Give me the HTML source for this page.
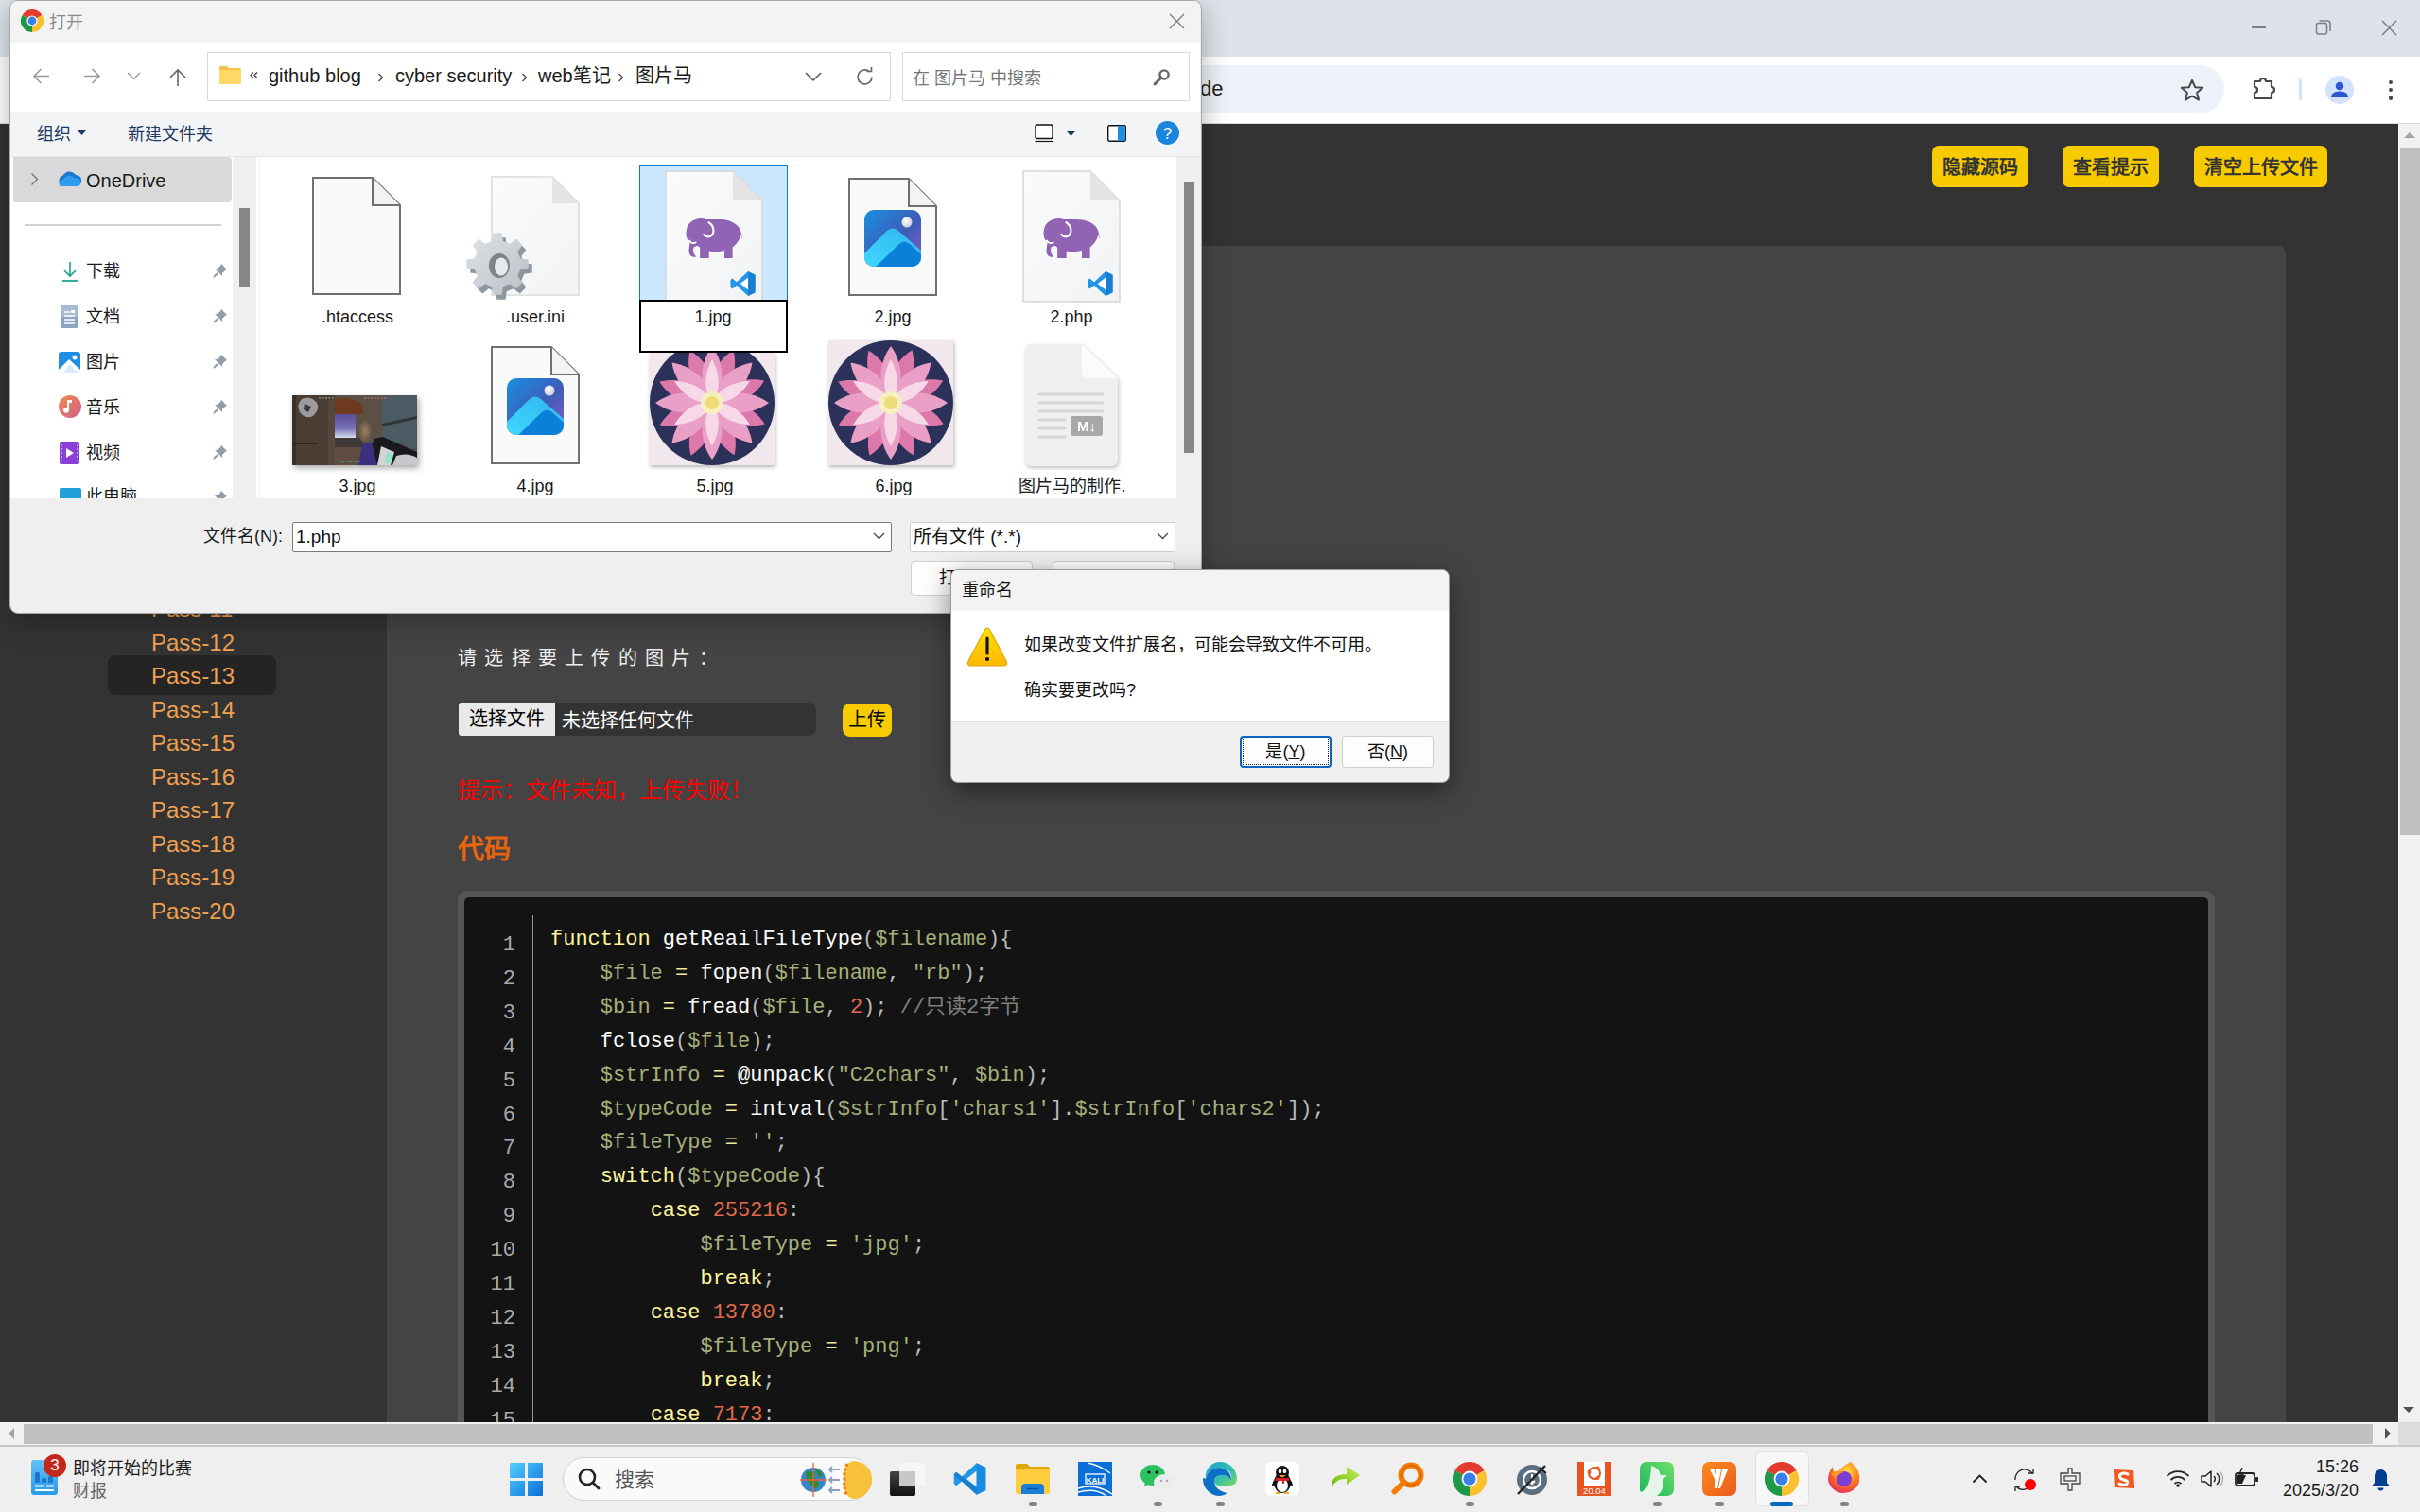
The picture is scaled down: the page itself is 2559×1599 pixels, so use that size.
<!DOCTYPE html>
<html lang="zh-CN"><head><meta charset="utf-8">
<style>
*{box-sizing:border-box;margin:0;padding:0}
html,body{width:2559px;height:1599px;overflow:hidden;background:#333;font-family:"Liberation Sans",sans-serif}
.a{position:absolute}
/* chrome */
#ctitle{left:0;top:0;width:2559px;height:60px;background:#dee3eb}
#ctool{left:0;top:60px;width:2559px;height:71px;background:#fff;border-bottom:1px solid #dcdcdc}
#pill{left:1000px;top:69px;width:1352px;height:51px;border-radius:26px;background:#edf2fa}
/* page */
#page{left:0;top:131px;width:2536px;height:1373px;background:#333;overflow:hidden}
#hdr{left:0;top:0;width:2536px;height:99px;background:#333;border-bottom:1px solid #000}
.ybtn{background:#f7cb00;border-radius:7px;color:#333;font-weight:bold;font-size:20px;height:44px;line-height:46px;text-align:center}
#main{left:409px;top:129px;width:2008px;height:1400px;background:#444;border-radius:8px}
.pass{left:160px;color:#f0a050;font-size:24px;line-height:30px}
#vs{left:2536px;top:131px;width:23px;height:1373px;background:#f1f1f1;border-left:1px solid #fff}
#hs{left:0;top:1504px;width:2536px;height:24px;background:#f1f1f1}
#corner{left:2536px;top:1504px;width:23px;height:24px;background:#dcdcdc}
#task{left:0;top:1528px;width:2559px;height:71px;background:#efefef;border-top:2px solid #c8c8c8}

.lnum{font-family:"Liberation Mono",monospace;font-size:22px;line-height:35.9px;color:#aaa;text-align:right}
.code{font-family:"Liberation Mono",monospace;font-size:22px;line-height:35.9px;color:#fff;white-space:pre}
.k{color:#fff59d}.f{color:#fff}.v{color:#a6b07a}.p{color:#bbb}.o{color:#f0e8a0}.s{color:#a6b07a}.n{color:#e0694a}.c{color:#808080}
.lbl{width:180px;text-align:center;font-size:18px;line-height:24px;color:#1a1a1a;white-space:nowrap}
</style></head><body>
<div id="ctitle" class="a"></div>
<div id="ctool" class="a"></div>
<div id="pill" class="a"></div>

<div id="page" class="a">
  <div id="hdr" class="a">
    <div class="a ybtn" style="left:2043px;top:23px;width:102px">隐藏源码</div>
    <div class="a ybtn" style="left:2181px;top:23px;width:102px">查看提示</div>
    <div class="a ybtn" style="left:2320px;top:23px;width:141px">清空上传文件</div>
  </div>

  <div class="a" style="left:114px;top:562px;width:178px;height:42px;background:#242424;border-radius:8px"></div>
<div class="a pass" style="top:498.0px">Pass-11</div>
<div class="a pass" style="top:533.5px">Pass-12</div>
<div class="a pass" style="top:569.0px">Pass-13</div>
<div class="a pass" style="top:604.5px">Pass-14</div>
<div class="a pass" style="top:640.0px">Pass-15</div>
<div class="a pass" style="top:675.5px">Pass-16</div>
<div class="a pass" style="top:711.0px">Pass-17</div>
<div class="a pass" style="top:746.5px">Pass-18</div>
<div class="a pass" style="top:782.0px">Pass-19</div>
<div class="a pass" style="top:817.5px">Pass-20</div>

  <div id="main" class="a"></div>
  <div class="a" style="left:484px;top:547px;color:#eee;font-size:20px;letter-spacing:8.3px;line-height:36px;white-space:nowrap">请选择要上传的图片：</div>
  <div class="a" style="left:485px;top:612px;width:378px;height:35px;background:#333;border-radius:8px"></div>
  <div class="a" style="left:485px;top:612px;width:102px;height:35px;background:#e9e9e9;border-radius:3px 0 0 3px;color:#000;font-size:20px;line-height:35px;text-align:center">选择文件</div>
  <div class="a" style="left:594px;top:614px;color:#fff;font-size:20px;line-height:35px;white-space:nowrap">未选择任何文件</div>
  <div class="a" style="left:891px;top:613px;width:52px;height:35px;background:#f7cb00;border-radius:8px;color:#000;font-size:20px;line-height:35px;text-align:center">上传</div>
  <div class="a" style="left:484px;top:689px;color:#f00;font-size:24px;line-height:32px;white-space:nowrap">提示：文件未知，上传失败！</div>
  <div class="a" style="left:484px;top:750px;color:#e8650e;font-size:28px;font-weight:bold;line-height:36px">代码</div>
  <div class="a" style="left:484px;top:811px;width:1858px;height:700px;background:#555;border-radius:10px"></div>
  <div class="a" style="left:491px;top:818px;width:1844px;height:700px;background:#131313;border-radius:5px"></div>
  <div class="a" style="left:563px;top:837px;width:1px;height:700px;background:#999"></div>
  <div class="a lnum" style="left:491px;top:851px;width:54px"><div>1</div><div>2</div><div>3</div><div>4</div><div>5</div><div>6</div><div>7</div><div>8</div><div>9</div><div>10</div><div>11</div><div>12</div><div>13</div><div>14</div><div>15</div></div>
  <div class="a code" style="left:582px;top:845px"><div><span class="k">function</span> <span class="f">getReailFileType</span><span class="p">(</span><span class="v">$filename</span><span class="p">){</span></div><div>    <span class="v">$file</span> <span class="o">=</span> <span class="f">fopen</span><span class="p">(</span><span class="v">$filename</span><span class="p">,</span> <span class="s">"rb"</span><span class="p">);</span></div><div>    <span class="v">$bin</span> <span class="o">=</span> <span class="f">fread</span><span class="p">(</span><span class="v">$file</span><span class="p">,</span> <span class="n">2</span><span class="p">);</span> <span class="c">//只读2字节</span></div><div>    <span class="f">fclose</span><span class="p">(</span><span class="v">$file</span><span class="p">);</span></div><div>    <span class="v">$strInfo</span> <span class="o">=</span> <span class="f">@unpack</span><span class="p">(</span><span class="s">"C2chars"</span><span class="p">,</span> <span class="v">$bin</span><span class="p">);</span></div><div>    <span class="v">$typeCode</span> <span class="o">=</span> <span class="f">intval</span><span class="p">(</span><span class="v">$strInfo</span><span class="p">[</span><span class="s">'chars1'</span><span class="p">].</span><span class="v">$strInfo</span><span class="p">[</span><span class="s">'chars2'</span><span class="p">]);</span></div><div>    <span class="v">$fileType</span> <span class="o">=</span> <span class="s">''</span><span class="p">;</span></div><div>    <span class="k">switch</span><span class="p">(</span><span class="v">$typeCode</span><span class="p">){</span></div><div>        <span class="k">case</span> <span class="n">255216</span><span class="p">:</span></div><div>            <span class="v">$fileType</span> <span class="o">=</span> <span class="s">'jpg'</span><span class="p">;</span></div><div>            <span class="k">break</span><span class="p">;</span></div><div>        <span class="k">case</span> <span class="n">13780</span><span class="p">:</span></div><div>            <span class="v">$fileType</span> <span class="o">=</span> <span class="s">'png'</span><span class="p">;</span></div><div>            <span class="k">break</span><span class="p">;</span></div><div>        <span class="k">case</span> <span class="n">7173</span><span class="p">:</span></div></div>
</div>
<div id="vs" class="a"></div>
<div id="hs" class="a"></div>
<div id="corner" class="a"></div>
<div id="task" class="a"></div>
<!-- chrome toolbar details -->
<div class="a" style="left:1269px;top:79px;font-size:22px;line-height:30px;color:#1f1f1f">de</div>
<svg class="a" style="left:2305px;top:83px" width="26" height="24" viewBox="0 0 26 24"><path d="M13 1.8L16.2 9.2L24.2 9.8L18.1 15L20 22.6L13 18.5L6 22.6L7.9 15L1.8 9.8L9.8 9.2Z" fill="none" stroke="#474747" stroke-width="2" stroke-linejoin="round"/></svg>
<svg class="a" style="left:2381px;top:80px" width="27" height="27" viewBox="0 0 27 27"><path d="M3 6H9A3 3 0 0 1 15 6H21V12A3 3 0 0 1 21 18V24H3V18A3 3 0 0 0 3 12Z" fill="none" stroke="#474747" stroke-width="2.2" stroke-linejoin="round"/></svg>
<div class="a" style="left:2431px;top:83px;width:3px;height:23px;background:#d3e3fd;border-radius:2px"></div>
<div class="a" style="left:2459px;top:80px;width:30px;height:30px;border-radius:50%;background:#d3e3fd"></div>
<svg class="a" style="left:2464px;top:85px" width="20" height="20" viewBox="0 0 20 20"><circle cx="10" cy="6" r="4.3" fill="#2f55d4"/><path d="M1 18Q1 11.5 10 11.5Q19 11.5 19 18Z" fill="#2f55d4"/></svg>
<div class="a" style="left:2525.5px;top:84.5px;width:4.5px;height:4.5px;border-radius:50%;background:#474747"></div>
<div class="a" style="left:2525.5px;top:92.8px;width:4.5px;height:4.5px;border-radius:50%;background:#474747"></div>
<div class="a" style="left:2525.5px;top:101px;width:4.5px;height:4.5px;border-radius:50%;background:#474747"></div>
<div class="a" style="left:2381px;top:28px;width:15px;height:1.5px;background:#7a7f85"></div>
<svg class="a" style="left:2448px;top:20px" width="18" height="18" viewBox="0 0 18 18"><rect x="1.5" y="4.5" width="11" height="11.5" rx="2" fill="none" stroke="#7a7f85" stroke-width="1.5"/><path d="M4.5 2H13A3 3 0 0 1 16 5V13" fill="none" stroke="#7a7f85" stroke-width="1.5"/></svg>
<svg class="a" style="left:2518px;top:21px" width="17" height="17"><path d="M1 1L16 16M16 1L1 16" stroke="#7a7f85" stroke-width="1.5"/></svg>
<!-- page scrollbars -->
<svg class="a" style="left:2542px;top:139px" width="12" height="8"><path d="M0 7L6 1L12 7Z" fill="#a3a3a3"/></svg>
<div class="a" style="left:2538px;top:156px;width:21px;height:727px;background:#c1c1c1"></div>
<svg class="a" style="left:2541px;top:1487px" width="12" height="8"><path d="M0 1L6 7L12 1Z" fill="#505050"/></svg>
<svg class="a" style="left:8px;top:1510px" width="8" height="12"><path d="M7 0L1 6L7 12Z" fill="#a3a3a3"/></svg>
<div class="a" style="left:25px;top:1506px;width:2484px;height:21px;background:#c1c1c1"></div>
<svg class="a" style="left:2521px;top:1510px" width="8" height="12"><path d="M1 0L7 6L1 12Z" fill="#505050"/></svg>
<!-- taskbar -->
<svg class="a" style="left:33px;top:1544px" width="29" height="37" viewBox="0 0 29 37"><defs><linearGradient id="gwd" x1="0" y1="0" x2="0" y2="1"><stop offset="0" stop-color="#62c0f8"/><stop offset="1" stop-color="#2a9ae6"/></linearGradient></defs><rect width="28" height="37" rx="3" fill="url(#gwd)"/><rect x="4" y="13" width="5" height="11" rx="1.5" fill="#1a76d0"/><rect x="11" y="19" width="5" height="5" rx="1.5" fill="#1a76d0"/><rect x="18" y="17" width="5" height="7" rx="1.5" fill="#1a76d0"/><path d="M4 27.5H13M16 27.5H24M4 32H24" stroke="#fff" stroke-width="2"/></svg>
<div class="a" style="left:46px;top:1538px;width:24px;height:24px;border-radius:50%;background:#c4281c;color:#fff;font-size:17px;line-height:24px;text-align:center">3</div>
<div class="a" style="left:77px;top:1540px;font-size:18px;line-height:26px;color:#1a1a1a;white-space:nowrap">即将开始的比赛</div>
<div class="a" style="left:77px;top:1564px;font-size:18px;line-height:26px;color:#666;white-space:nowrap">财报</div>
<svg class="a" style="left:539px;top:1547px" width="35" height="35" viewBox="0 0 35 35"><defs><linearGradient id="gwin" x1="0" y1="0" x2="1" y2="1"><stop offset="0" stop-color="#52d0ff"/><stop offset="1" stop-color="#0a6fd6"/></linearGradient></defs><path d="M1 0H16V16H0V1A1 1 0 0 1 1 0ZM19 0H34A1 1 0 0 1 35 1V16H19ZM0 19H16V35H1A1 1 0 0 1 0 34ZM19 19H35V34A1 1 0 0 1 34 35H19Z" fill="url(#gwin)"/></svg>
<div class="a" style="left:595px;top:1541px;width:327px;height:46px;border-radius:23px;background:#fafafa;border:1.5px solid #d2d2d2"></div>
<svg class="a" style="left:611px;top:1552px" width="24" height="24"><circle cx="10" cy="10" r="8" fill="none" stroke="#222" stroke-width="2.6"/><path d="M16 16L22 22" stroke="#222" stroke-width="2.8" stroke-linecap="round"/></svg>
<div class="a" style="left:650px;top:1550px;font-size:21px;line-height:30px;color:#555">搜索</div>
<svg class="a" style="left:846px;top:1545px" width="76" height="40" viewBox="0 0 76 40"><circle cx="14" cy="20" r="13" fill="#3a85c8"/><path d="M6 12Q12 9 16 13Q14 18 18 20Q22 26 16 30Q12 24 8 22Z" fill="#2f8a2a"/><path d="M16 8Q22 10 24 16L20 17Q18 12 16 8Z" fill="#2f8a2a"/><path d="M0 20H28M14 2V38" stroke="#f06040" stroke-width="1.3"/><path d="M32 9H42M32 20H42M32 31H42" stroke="#8aa0b8" stroke-width="2.2"/><path d="M34 6L31 9L34 12M34 17L31 20L34 23M34 28L31 31L34 34" fill="none" stroke="#8aa0b8" stroke-width="1.8"/><path d="M56 0A20 20 0 0 1 56 40Q46 38 46 20Q46 2 56 0Z" fill="#f7c23a"/><path d="M50 3Q46 10 47 20Q46 30 50 37" fill="none" stroke="#f07a18" stroke-width="3" stroke-dasharray="3 2"/></svg>
<svg class="a" style="left:941px;top:1547px" width="37" height="35" viewBox="0 0 37 35"><defs><linearGradient id="gtv" x1="0" y1="0" x2="0" y2="1"><stop offset="0" stop-color="#444"/><stop offset="1" stop-color="#111"/></linearGradient></defs><rect x="10" y="0" width="27" height="24" rx="2" fill="#f6f6f6"/><rect x="0" y="9" width="27" height="26" rx="2" fill="url(#gtv)"/><rect x="10" y="9" width="17" height="15" fill="#c8c8c8"/></svg>
<!-- pinned apps -->
<svg class="a" style="left:1007px;top:1546px" width="37" height="36" viewBox="0 0 30 30"><path d="M21 1L29 5V25L21 29L8 17L3 21L1 19V11L3 9L8 13Z" fill="#2196e8"/><path d="M21 8V22L12 15Z" fill="#efefef"/><path d="M21 1L29 5V25L21 29Z" fill="#1a8ae0"/><path d="M1 11L3 9L21 22V29Z" fill="#0f6fbf" opacity=".6"/></svg>
<svg class="a" style="left:1074px;top:1547px" width="36" height="33" viewBox="0 0 36 33"><path d="M0 3A2 2 0 0 1 2 1H12L15 4H34A2 2 0 0 1 36 6V8H0Z" fill="#e0a800"/><path d="M0 6H36V31A2 2 0 0 1 34 33H2A2 2 0 0 1 0 31Z" fill="#ffcc3d"/><path d="M6 33V26A4 4 0 0 1 10 22H26A4 4 0 0 1 30 26V33Z" fill="#1a7fd8"/><path d="M12 27.5H24" stroke="#0c4f96" stroke-width="1.5"/></svg>
<div class="a" style="left:1088px;top:1588px;width:9px;height:4.5px;border-radius:3px;background:#858585"></div>
<svg class="a" style="left:1140px;top:1546px" width="36" height="36" viewBox="0 0 36 36"><rect width="36" height="36" fill="#0a6fd6"/><rect x="8" y="13" width="20" height="10" fill="none" stroke="#fff" stroke-width="1.3"/><text x="18" y="21.5" font-size="8" font-family="Liberation Sans" font-weight="bold" text-anchor="middle" fill="#fff">KALI</text><path d="M0 28Q18 22 36 34M0 32Q18 27 30 36M10 1Q22 3 34 12" fill="none" stroke="#fff" stroke-width="1.4"/></svg>
<svg class="a" style="left:1206px;top:1549px" width="36" height="30" viewBox="0 0 36 30"><ellipse cx="13" cy="11" rx="13" ry="11" fill="#2dc160"/><path d="M5 18L4 23L10 20Z" fill="#2dc160"/><circle cx="9" cy="8" r="1.6" fill="#111"/><circle cx="17" cy="8" r="1.6" fill="#111"/><ellipse cx="25" cy="19" rx="11" ry="9" fill="#ececec"/><circle cx="22" cy="17" r="1.3" fill="#aaa"/><circle cx="28" cy="17" r="1.3" fill="#aaa"/></svg>
<div class="a" style="left:1220px;top:1588px;width:9px;height:4.5px;border-radius:3px;background:#858585"></div>
<svg class="a" style="left:1272px;top:1546px" width="36" height="36" viewBox="0 0 36 36"><defs><linearGradient id="ged" x1="0" y1="0" x2="1" y2="1"><stop offset="0" stop-color="#1aa0d8"/><stop offset=".6" stop-color="#35c1a8"/><stop offset="1" stop-color="#7ed957"/></linearGradient></defs><path d="M18 0A18 18 0 0 1 36 18Q36 25 28 25H18Q12 25 12 20Q12 14 20 14Q28 14 30 20Q32 8 18 6Q6 6 3 18Q2 9 8 4Q12 0 18 0Z" fill="url(#ged)"/><path d="M3 18Q6 6 18 6Q30 8 30 20Q28 14 20 14Q12 14 12 20Q12 30 26 33Q22 36 18 36A18 18 0 0 1 0 18Q0 16 3 18Z" fill="#0c6fc6"/></svg>
<div class="a" style="left:1286px;top:1588px;width:9px;height:4.5px;border-radius:3px;background:#858585"></div>
<svg class="a" style="left:1338px;top:1546px" width="36" height="36" viewBox="0 0 36 36"><rect width="36" height="36" rx="6" fill="#fff"/><ellipse cx="18" cy="22" rx="9" ry="11" fill="#111"/><ellipse cx="18" cy="25" rx="6" ry="7" fill="#fff"/><circle cx="18" cy="11" r="7" fill="#111"/><ellipse cx="15.5" cy="10" rx="1.8" ry="2.2" fill="#fff"/><ellipse cx="20.5" cy="10" rx="1.8" ry="2.2" fill="#fff"/><path d="M14 14H22L18 16.5Z" fill="#f5a623"/><path d="M11 17H25V20H20V23H18V20H11Z" fill="#e02020"/><path d="M8 25L10 20M28 25L26 20" stroke="#111" stroke-width="2.5"/><path d="M11 33H16M20 33H25" stroke="#f5a623" stroke-width="2"/></svg>
<svg class="a" style="left:1407px;top:1550px" width="32" height="24" viewBox="0 0 32 24"><defs><linearGradient id="gar" x1="0" y1="1" x2="1" y2="0"><stop offset="0" stop-color="#6bb800"/><stop offset="1" stop-color="#c8f060"/></linearGradient></defs><path d="M1 23Q0 9 17 9V1L31 10L17 20V14Q6 13 1 23Z" fill="url(#gar)"/></svg>
<svg class="a" style="left:1471px;top:1546px" width="35" height="35" viewBox="0 0 35 35"><circle cx="21" cy="14" r="10.5" fill="none" stroke="#f57c00" stroke-width="6"/><circle cx="21" cy="14" r="10.5" fill="none" stroke="#9a3e00" stroke-width="1" opacity=".5"/><path d="M13.5 21.5L3.5 31.5" stroke="#f57c00" stroke-width="6" stroke-linecap="round"/></svg>
<svg class="a" style="left:1536px;top:1546px" width="36" height="36"><use href="#chrome"/></svg>
<div class="a" style="left:1550px;top:1588px;width:9px;height:4.5px;border-radius:3px;background:#858585"></div>
<svg class="a" style="left:1604px;top:1547px" width="34" height="34" viewBox="0 0 34 34"><circle cx="16" cy="18" r="16" fill="#5a7080"/><circle cx="16" cy="18" r="9" fill="none" stroke="#fff" stroke-width="2.5"/><path d="M16 12V22M13 19L16 22L19 19" fill="none" stroke="#fff" stroke-width="2"/><path d="M1 33L30 3" stroke="#222" stroke-width="2.4"/><path d="M24 5L31 11" stroke="#222" stroke-width="2"/></svg>
<svg class="a" style="left:1668px;top:1546px" width="36" height="36" viewBox="0 0 36 36"><rect width="36" height="36" fill="#e95420"/><rect x="7" y="0" width="22" height="26" fill="#fff"/><circle cx="18" cy="12" r="6" fill="none" stroke="#e95420" stroke-width="2"/><circle cx="12.5" cy="11" r="2" fill="#e95420"/><circle cx="21.5" cy="6.5" r="2" fill="#e95420"/><circle cx="21.5" cy="17" r="2" fill="#e95420"/><text x="18" y="34" font-size="9.5" font-family="Liberation Sans" text-anchor="middle" fill="#fff">20.04</text></svg>
<svg class="a" style="left:1734px;top:1546px" width="36" height="36" viewBox="0 0 36 36"><defs><linearGradient id="ggrn" x1="0" y1="1" x2="1" y2="0"><stop offset="0" stop-color="#19b35a"/><stop offset="1" stop-color="#6ee06a"/></linearGradient></defs><rect width="36" height="36" rx="7" fill="url(#ggrn)"/><path d="M12 4Q20 6 22 14L29 14L25 18Q26 30 18 36H0V32Q8 30 10 20Q12 12 12 4Z" fill="#e6f5ec"/></svg>
<div class="a" style="left:1748px;top:1588px;width:9px;height:4.5px;border-radius:3px;background:#858585"></div>
<svg class="a" style="left:1800px;top:1546px" width="36" height="36" viewBox="0 0 36 36"><defs><linearGradient id="gory" x1="0" y1="0" x2="1" y2="1"><stop offset="0" stop-color="#fb8c1c"/><stop offset="1" stop-color="#ea5a20"/></linearGradient></defs><rect width="36" height="36" rx="7" fill="url(#gory)"/><path d="M8 8L13 8L15 16L14 20ZM15 8H20L16 28L13 28ZM21 8H27L19 28L17 28Z" fill="#fff"/></svg>
<div class="a" style="left:1814px;top:1588px;width:9px;height:4.5px;border-radius:3px;background:#858585"></div>
<div class="a" style="left:1856px;top:1535px;width:57px;height:58px;border-radius:6px;background:#f7f7f7;border:1px solid #e2e2e2"></div>
<svg class="a" style="left:1866px;top:1546px" width="36" height="36"><use href="#chrome"/></svg>
<div class="a" style="left:1872px;top:1588px;width:24px;height:5px;border-radius:3px;background:#0067c0"></div>
<svg class="a" style="left:1932px;top:1545px" width="36" height="36" viewBox="0 0 36 36"><defs><radialGradient id="gff" cx=".6" cy=".3" r=".8"><stop offset="0" stop-color="#ffe040"/><stop offset=".5" stop-color="#ff7a18"/><stop offset="1" stop-color="#e0206a"/></radialGradient></defs><path d="M25 1Q36 10 34 22A17 17 0 0 1 1 20Q1 12 6 6Q6 12 10 14Q14 6 25 1Z" fill="url(#gff)"/><circle cx="18" cy="19" r="8" fill="#7b3fd6"/><path d="M4 14Q10 8 18 12Q12 13 10 18Z" fill="#ff9a1e"/></svg>
<div class="a" style="left:1946px;top:1588px;width:9px;height:4.5px;border-radius:3px;background:#858585"></div>
<!-- tray -->
<svg class="a" style="left:2085px;top:1558px" width="17" height="11"><path d="M1.5 9.5L8.5 2.5L15.5 9.5" fill="none" stroke="#222" stroke-width="1.8"/></svg>
<svg class="a" style="left:2128px;top:1551px" width="27" height="27" viewBox="0 0 27 27"><path d="M3 14A10 10 0 0 1 21 7" fill="none" stroke="#222" stroke-width="1.3"/><path d="M17 7H22V2" fill="none" stroke="#222" stroke-width="1.3"/><path d="M21 17A10 10 0 0 1 4 21" fill="none" stroke="#222" stroke-width="1.3"/><path d="M8 21H3V26" fill="none" stroke="#222" stroke-width="1.3"/><circle cx="19" cy="19" r="6" fill="#ff0000"/></svg>
<svg class="a" style="left:2177px;top:1552px" width="24" height="25" viewBox="0 0 24 25"><path d="M10 1H14V6H22V17H14V24H10V17H2V6H10Z" fill="none" stroke="#444" stroke-width="1.3"/><rect x="6" y="9" width="12" height="5" fill="none" stroke="#444" stroke-width="1.3"/></svg>
<svg class="a" style="left:2233px;top:1551px" width="26" height="26" viewBox="0 0 26 26"><path d="M3 2L24 5L23 24L2 21Z" fill="#f05a22" transform="rotate(-6 13 13)"/><path d="M17 8Q13 6 9.5 8Q7 10 10 13Q13 14 16 15Q18 17 15 19Q11 20 8 18" fill="none" stroke="#fff" stroke-width="3" stroke-linecap="round"/></svg>
<svg class="a" style="left:2290px;top:1554px" width="26" height="19" viewBox="0 0 26 19"><path d="M1.5 7A16 16 0 0 1 24.5 7M5.5 11A10.5 10.5 0 0 1 20.5 11M9.5 15A5 5 0 0 1 16.5 15" fill="none" stroke="#222" stroke-width="1.8"/><circle cx="13" cy="17" r="1.8" fill="#222"/></svg>
<svg class="a" style="left:2327px;top:1554px" width="25" height="20" viewBox="0 0 25 20"><path d="M1 7H5L11 2V18L5 13H1Z" fill="none" stroke="#222" stroke-width="1.5" stroke-linejoin="round"/><path d="M14 7A4 4 0 0 1 14 13M17 4A8 8 0 0 1 17 16" fill="none" stroke="#222" stroke-width="1.5"/><path d="M20 2A11 11 0 0 1 20 18" fill="none" stroke="#aaa" stroke-width="1.3"/></svg>
<svg class="a" style="left:2363px;top:1552px" width="26" height="21" viewBox="0 0 26 21"><rect x="1" y="6" width="20" height="13" rx="2.5" fill="none" stroke="#222" stroke-width="1.8"/><rect x="22" y="10" width="3" height="5" rx="1" fill="#222"/><path d="M3 8H12L8 17H3Z" fill="#222"/><path d="M8 0L5 7H9L6 13" fill="none" stroke="#222" stroke-width="1.4"/></svg>
<div class="a" style="left:2394px;top:1537px;width:100px;text-align:right;font-size:18px;line-height:28px;color:#1a1a1a">15:26</div>
<div class="a" style="left:2344px;top:1562px;width:150px;text-align:right;font-size:18px;line-height:28px;color:#1a1a1a">2025/3/20</div>
<svg class="a" style="left:2507px;top:1553px" width="21" height="24" viewBox="0 0 21 24"><path d="M10.5 1A6.5 6.5 0 0 1 17 7.5V15L20 18.5H1L4 15V7.5A6.5 6.5 0 0 1 10.5 1Z" fill="#003e92"/><path d="M7.5 20.5H13.5A3 3 0 0 1 7.5 20.5Z" fill="#003e92"/></svg>

<!-- ===== FILE DIALOG ===== -->
<svg width="0" height="0" style="position:absolute">
<defs>
<symbol id="chrome" viewBox="0 0 24 24"><path d="M12 12L1.6 6A12 12 0 0 1 22.4 6Z" fill="#e33b2e"/><path d="M12 12L22.4 6A12 12 0 0 1 12 24Z" fill="#fbc02d"/><path d="M12 12L12 24A12 12 0 0 1 1.6 6Z" fill="#1e9a46"/><circle cx="12" cy="12" r="5.6" fill="#fff"/><circle cx="12" cy="12" r="4.4" fill="#3a7ee8"/></symbol>
<symbol id="doc" viewBox="0 0 94 125"><path d="M1 1H64L93 30V124H1Z" fill="#fafafa" stroke="#707070" stroke-width="2"/><path d="M64 1V30H93" fill="#f3f3f3" stroke="#707070" stroke-width="2"/></symbol>
<symbol id="docl" viewBox="0 0 104 140"><defs><linearGradient id="gdl" x1="0" y1="0" x2="1" y2="1"><stop offset="0" stop-color="#fbfbfb"/><stop offset="1" stop-color="#f1f3f5"/></linearGradient></defs><path d="M1 1H72L103 32V139H1Z" fill="url(#gdl)" stroke="#d6d6d6" stroke-width="1.5"/><path d="M72 1V32H103Z" fill="#e4e4e4"/></symbol>
<symbol id="photos" viewBox="0 0 60 60"><defs><linearGradient id="gph" x1="0" y1="0" x2="1" y2="1"><stop offset="0" stop-color="#1690e2"/><stop offset=".55" stop-color="#3f5cb8"/><stop offset="1" stop-color="#8a5cc8"/></linearGradient><linearGradient id="gmt" x1="0" y1="1" x2="1" y2="0"><stop offset="0" stop-color="#3fd8ff"/><stop offset="1" stop-color="#30b4ee"/></linearGradient><radialGradient id="gsun" cx=".4" cy=".35" r=".7"><stop offset="0" stop-color="#fff"/><stop offset="1" stop-color="#c8cad8"/></radialGradient></defs><rect x="0" y="0" width="60" height="60" rx="10" fill="url(#gph)"/><path d="M0 46L24 22Q30 17 36 22L60 43V50A10 10 0 0 1 50 60H10A10 10 0 0 1 0 50Z" fill="url(#gmt)"/><path d="M12 60L37 36Q42 31 48 36L60 47V50A10 10 0 0 1 50 60Z" fill="#0b80d8"/><circle cx="45" cy="13" r="5.5" fill="url(#gsun)"/></symbol>
<symbol id="eleph" viewBox="0 0 64 48"><path d="M24 3C14 0 3 5 2 16C1 22 3 26 6 28L5 36C4 42 8 46 13 44C10 42 9 38 10 34L14 32L17 34V46H27V38C33 39 40 39 44 37V46H53V34C58 30 61 25 62 20L64 25L62 16C60 8 50 3 38 3C32 3 28 3 24 3Z" fill="#9063b4"/><path d="M26 6C33 10 34 19 28 22C25 23 22 21 21 19" fill="none" stroke="#fff" stroke-width="2.2"/><path d="M5 26C7 30 11 30 13 28" fill="none" stroke="#fff" stroke-width="1.8"/></symbol>
<symbol id="vsc" viewBox="0 0 30 30"><path d="M21 1L29 5V25L21 29L8 17L3 21L1 19V11L3 9L8 13Z" fill="#2196e8"/><path d="M21 8V22L12 15Z" fill="#fff"/><path d="M21 1L29 5V25L21 29Z" fill="#1a7fd0"/></symbol>
<symbol id="pin" viewBox="0 0 16 16"><path d="M9 1L15 7L13 8L10 11L10 14L2 6L5 6L8 3Z" fill="#919da6"/><path d="M5 11L1 15" stroke="#919da6" stroke-width="2"/></symbol>
<symbol id="lotus" viewBox="0 0 132 132"><rect width="132" height="132" fill="#f1e8ee"/><circle cx="66" cy="66" r="66" fill="#2b3158"/><g fill="#dc78aa"><path d="M66 64C50 50 54 22 66 6C78 22 82 50 66 64Z" transform="rotate(22 66 66)"/><path d="M66 64C50 50 54 22 66 6C78 22 82 50 66 64Z" transform="rotate(67 66 66)"/><path d="M66 64C50 50 54 22 66 6C78 22 82 50 66 64Z" transform="rotate(112 66 66)"/><path d="M66 64C50 50 54 22 66 6C78 22 82 50 66 64Z" transform="rotate(157 66 66)"/><path d="M66 64C50 50 54 22 66 6C78 22 82 50 66 64Z" transform="rotate(202 66 66)"/><path d="M66 64C50 50 54 22 66 6C78 22 82 50 66 64Z" transform="rotate(247 66 66)"/><path d="M66 64C50 50 54 22 66 6C78 22 82 50 66 64Z" transform="rotate(292 66 66)"/><path d="M66 64C50 50 54 22 66 6C78 22 82 50 66 64Z" transform="rotate(337 66 66)"/></g><g fill="#eaa0c6"><path d="M66 64C50 50 54 22 66 6C78 22 82 50 66 64Z" transform="rotate(0 66 66)"/><path d="M66 64C50 50 54 22 66 6C78 22 82 50 66 64Z" transform="rotate(45 66 66)"/><path d="M66 64C50 50 54 22 66 6C78 22 82 50 66 64Z" transform="rotate(90 66 66)"/><path d="M66 64C50 50 54 22 66 6C78 22 82 50 66 64Z" transform="rotate(135 66 66)"/><path d="M66 64C50 50 54 22 66 6C78 22 82 50 66 64Z" transform="rotate(180 66 66)"/><path d="M66 64C50 50 54 22 66 6C78 22 82 50 66 64Z" transform="rotate(225 66 66)"/><path d="M66 64C50 50 54 22 66 6C78 22 82 50 66 64Z" transform="rotate(270 66 66)"/><path d="M66 64C50 50 54 22 66 6C78 22 82 50 66 64Z" transform="rotate(315 66 66)"/></g><g fill="#f7d8e8"><path d="M66 64C56 54 58 34 66 20C74 34 76 54 66 64Z" transform="rotate(0 66 66)"/><path d="M66 64C56 54 58 34 66 20C74 34 76 54 66 64Z" transform="rotate(60 66 66)"/><path d="M66 64C56 54 58 34 66 20C74 34 76 54 66 64Z" transform="rotate(120 66 66)"/><path d="M66 64C56 54 58 34 66 20C74 34 76 54 66 64Z" transform="rotate(180 66 66)"/><path d="M66 64C56 54 58 34 66 20C74 34 76 54 66 64Z" transform="rotate(240 66 66)"/><path d="M66 64C56 54 58 34 66 20C74 34 76 54 66 64Z" transform="rotate(300 66 66)"/></g><circle cx="66" cy="66" r="12" fill="#f6efc0"/><circle cx="66" cy="66" r="7" fill="#eedc7a"/></symbol>
</defs></svg>

<div class="a" style="left:10px;top:0;width:1261px;height:649px;background:#efefef;border:1px solid #a3a7ab;border-radius:9px;box-shadow:0 8px 30px rgba(0,0,0,.3);overflow:hidden">
  <div class="a" style="left:0;top:0;width:1258px;height:44px;background:#f3f3f3"></div>
  <div class="a" style="left:0;top:44px;width:1258px;height:73px;background:#fff"></div>
  <div class="a" style="left:0;top:117px;width:1258px;height:48px;background:#f3f4f6;border-bottom:1px solid #e6e7e9"></div>
  <div class="a" style="left:0;top:165px;width:235px;height:361px;background:#fff"></div>
  <div class="a" style="left:260px;top:165px;width:974px;height:361px;background:#fff"></div><div class="a" style="left:263px;top:165px;width:1px;height:361px;background:#f0f0f0"></div>
</div>
<svg class="a" style="left:22px;top:10px" width="24" height="24"><use href="#chrome"/></svg>
<div class="a" style="left:52px;top:12px;font-size:18px;line-height:24px;color:#8a8a8a">打开</div>
<svg class="a" style="left:1236px;top:14px" width="17" height="17"><path d="M1 1L16 16M16 1L1 16" stroke="#7a7a7a" stroke-width="1.3"/></svg>
<!-- nav -->
<svg class="a" style="left:34px;top:71px" width="20" height="19"><path d="M18 9.5H2M9.5 2L2 9.5L9.5 17" fill="none" stroke="#9a9a9a" stroke-width="1.6"/></svg>
<svg class="a" style="left:87px;top:71px" width="20" height="19"><path d="M2 9.5H18M10.5 2L18 9.5L10.5 17" fill="none" stroke="#9a9a9a" stroke-width="1.6"/></svg>
<svg class="a" style="left:134px;top:76px" width="15" height="9"><path d="M1 1L7.5 7.5L14 1" fill="none" stroke="#a0a0a0" stroke-width="1.5"/></svg>
<svg class="a" style="left:178px;top:72px" width="20" height="20"><path d="M10 19V2M2 10L10 2L18 10" fill="none" stroke="#666" stroke-width="1.6"/></svg>
<div class="a" style="left:219px;top:55px;width:723px;height:52px;border:1px solid #d9d9d9;background:#fff"></div>
<svg class="a" style="left:232px;top:70px" width="23" height="19"><path d="M0 1.5A1.5 1.5 0 0 1 1.5 0H8L10 2H21.5A1.5 1.5 0 0 1 23 3.5V17.5A1.5 1.5 0 0 1 21.5 19H1.5A1.5 1.5 0 0 1 0 17.5Z" fill="#f4c24a"/><path d="M0 4H23V17.5A1.5 1.5 0 0 1 21.5 19H1.5A1.5 1.5 0 0 1 0 17.5Z" fill="#ffd965"/></svg>
<svg class="a" style="left:264px;top:76px" width="9" height="7"><path d="M4 0.5L1 3.5L4 6.5M8 0.5L5 3.5L8 6.5" fill="none" stroke="#444" stroke-width="1.3"/></svg>
<div class="a" style="left:284px;top:66px;font-size:20px;line-height:28px;color:#1a1a1a;white-space:nowrap;word-spacing:0">github blog</div>
<svg class="a" style="left:399px;top:77px" width="7" height="10"><path d="M1.5 1L5.5 5L1.5 9" fill="none" stroke="#555" stroke-width="1.5"/></svg>
<div class="a" style="left:418px;top:66px;font-size:20px;line-height:28px;color:#1a1a1a;white-space:nowrap">cyber security</div>
<svg class="a" style="left:551px;top:77px" width="7" height="10"><path d="M1.5 1L5.5 5L1.5 9" fill="none" stroke="#555" stroke-width="1.5"/></svg>
<div class="a" style="left:569px;top:66px;font-size:20px;line-height:28px;color:#1a1a1a;white-space:nowrap">web笔记</div>
<svg class="a" style="left:653px;top:77px" width="7" height="10"><path d="M1.5 1L5.5 5L1.5 9" fill="none" stroke="#555" stroke-width="1.5"/></svg>
<div class="a" style="left:672px;top:66px;font-size:20px;line-height:28px;color:#1a1a1a;white-space:nowrap">图片马</div>
<svg class="a" style="left:851px;top:76px" width="18" height="11"><path d="M1 1L9 9L17 1" fill="none" stroke="#555" stroke-width="1.5"/></svg>
<svg class="a" style="left:904px;top:71px" width="21" height="21"><path d="M18 10.5A7.5 7.5 0 1 1 15.5 4.8" fill="none" stroke="#666" stroke-width="1.6"/><path d="M12.5 4.5H17.5V-0.5" fill="none" stroke="#666" stroke-width="1.6"/></svg>
<div class="a" style="left:954px;top:55px;width:304px;height:52px;border:1px solid #d9d9d9;background:#fff"></div>
<div class="a" style="left:965px;top:69px;font-size:18px;line-height:28px;color:#767676;white-space:nowrap">在 图片马 中搜索</div>
<svg class="a" style="left:1218px;top:72px" width="20" height="20"><circle cx="13" cy="7" r="4.6" fill="none" stroke="#666" stroke-width="2.4"/><path d="M10 10L3 17" stroke="#666" stroke-width="3" stroke-linecap="round"/></svg>
<!-- toolbar -->
<div class="a" style="left:39px;top:129px;font-size:18px;line-height:26px;color:#1e3a63">组织</div>
<svg class="a" style="left:82px;top:138px" width="9" height="6"><path d="M0 0H9L4.5 5Z" fill="#1e3a63"/></svg>
<div class="a" style="left:135px;top:129px;font-size:18px;line-height:26px;color:#1e3a63">新建文件夹</div>
<svg class="a" style="left:1094px;top:131px" width="20" height="20"><rect x="1" y="1" width="18" height="14.5" rx="1.5" fill="#fff" stroke="#111" stroke-width="1.4"/><path d="M0.5 18.5H19.5" stroke="#111" stroke-width="1.2"/></svg>
<svg class="a" style="left:1128px;top:139px" width="9" height="6"><path d="M0 0H9L4.5 5Z" fill="#1e3a63"/></svg>
<svg class="a" style="left:1171px;top:132px" width="20" height="18"><rect x="0.7" y="0.7" width="18.6" height="16.6" rx="1.5" fill="#fff" stroke="#111" stroke-width="1.4"/><rect x="11" y="1.4" width="7.6" height="15.2" fill="#1a8de6"/></svg>
<svg class="a" style="left:1222px;top:128px" width="25" height="25"><circle cx="12.5" cy="12.5" r="12.5" fill="#1a85dc"/><text x="12.5" y="19" font-size="17" font-family="Liberation Sans" text-anchor="middle" fill="#fff">?</text></svg>
<!-- left pane -->
<div class="a" style="left:14px;top:166px;width:231px;height:48px;background:#d9d9d9;border-radius:0 4px 4px 0"></div>
<svg class="a" style="left:32px;top:182px" width="9" height="15"><path d="M1.5 1.5L7.5 7.5L1.5 13.5" fill="none" stroke="#777" stroke-width="1.4"/></svg>
<svg class="a" style="left:61px;top:181px" width="25" height="16"><path d="M6 16A6 6 0 0 1 5.5 4.5A8 8 0 0 1 19 4A5.5 5.5 0 0 1 19.5 16Z" fill="#1b78d4"/><path d="M3 16A4 4 0 0 1 6 9A7 7 0 0 1 18 7.5A4.5 4.5 0 0 1 24 13A3.5 3.5 0 0 1 21 16Z" fill="#2d9bf0"/></svg>
<div class="a" style="left:91px;top:177px;font-size:20px;line-height:28px;color:#1a1a1a">OneDrive</div>
<div class="a" style="left:26px;top:237px;width:208px;height:2px;background:#d0d0d0"></div>
<svg class="a" style="left:64px;top:276px" width="20" height="22"><path d="M10 1V16M4 10L10 16L16 10" fill="none" stroke="#1aa38a" stroke-width="1.6"/><path d="M2 21H18" stroke="#1aa38a" stroke-width="1.8"/></svg>
<div class="a" style="left:91px;top:273px;font-size:18px;line-height:28px;color:#1a1a1a">下载</div>
<svg class="a" style="left:64px;top:323px" width="19" height="24"><rect x="0" y="0" width="19" height="24" rx="2" fill="#8ea4c4"/><rect x="0" y="0" width="19" height="12" rx="2" fill="#a9bad3"/><path d="M4 7H10M4 11H15M4 15H15M4 19H15" stroke="#fff" stroke-width="1.4"/><rect x="11" y="5" width="4" height="3" fill="#fff"/></svg>
<div class="a" style="left:91px;top:321px;font-size:18px;line-height:28px;color:#1a1a1a">文档</div>
<svg class="a" style="left:62px;top:372px" width="23" height="22"><rect width="23" height="22" rx="3" fill="#1e8fe3"/><path d="M0 19L11 8L23 19V20A2 2 0 0 1 21 22H2A2 2 0 0 1 0 20Z" fill="#fff"/><path d="M5 22L12 13L20 22Z" fill="#d3ecff"/><circle cx="17" cy="6" r="2.5" fill="#fff"/></svg>
<div class="a" style="left:91px;top:369px;font-size:18px;line-height:28px;color:#1a1a1a">图片</div>
<svg class="a" style="left:62px;top:418px" width="24" height="24"><defs><linearGradient id="gmu" x1="0" y1="0" x2="1" y2="1"><stop offset="0" stop-color="#f08a4b"/><stop offset="1" stop-color="#d0608f"/></linearGradient></defs><circle cx="12" cy="12" r="12" fill="url(#gmu)"/><path d="M11 5V15.5A3 3 0 1 1 9 13V5H14V8H11" fill="#fff"/></svg>
<div class="a" style="left:91px;top:417px;font-size:18px;line-height:28px;color:#1a1a1a">音乐</div>
<svg class="a" style="left:63px;top:467px" width="21" height="24"><rect width="21" height="24" rx="2" fill="#8a3fd8"/><path d="M7 7L15 12L7 17Z" fill="#fff"/><path d="M2 3V21M19 3V21" stroke="#c79bf2" stroke-width="2" stroke-dasharray="2 2"/></svg>
<div class="a" style="left:91px;top:465px;font-size:18px;line-height:28px;color:#1a1a1a">视频</div>
<div class="a" style="left:63px;top:516px;width:23px;height:11px;overflow:hidden"><div style="width:23px;height:18px;background:#1fa0d8;border-radius:2px"></div></div>
<div class="a" style="left:91px;top:511px;height:16px;overflow:hidden;font-size:18px;line-height:28px;color:#1a1a1a">此电脑</div>
<svg class="a" style="left:225px;top:278px" width="16" height="16"><use href="#pin"/></svg>
<svg class="a" style="left:225px;top:326px" width="16" height="16"><use href="#pin"/></svg>
<svg class="a" style="left:225px;top:374px" width="16" height="16"><use href="#pin"/></svg>
<svg class="a" style="left:225px;top:422px" width="16" height="16"><use href="#pin"/></svg>
<svg class="a" style="left:225px;top:470px" width="16" height="16"><use href="#pin"/></svg>
<div class="a" style="left:225px;top:518px;width:16px;height:9px;overflow:hidden"><svg width="16" height="16"><use href="#pin"/></svg></div>
<!-- left scrollbar lane -->
<div class="a" style="left:246px;top:166px;width:25px;height:361px;background:#efefef"></div>
<div class="a" style="left:253px;top:220px;width:11px;height:84px;background:#868686"></div>
<!-- right scrollbar lane -->
<div class="a" style="left:1244px;top:166px;width:25px;height:361px;background:#efefef"></div>
<div class="a" style="left:1252px;top:192px;width:11px;height:287px;background:#868686"></div>
<!-- files -->
<svg class="a" style="left:330px;top:187px" width="94" height="125"><use href="#doc"/></svg>
<div class="a lbl" style="left:288px;top:323px">.htaccess</div>
<svg class="a" style="left:519px;top:186px" width="94" height="127" viewBox="0 0 104 140" preserveAspectRatio="none"><use href="#docl"/></svg>
<svg class="a" style="left:490px;top:237px" width="76" height="88" viewBox="0 0 76 88"><defs><linearGradient id="ggr" x1="0" y1="0" x2="1" y2="1"><stop offset="0" stop-color="#dfe3e7"/><stop offset="1" stop-color="#b9c0c6"/></linearGradient></defs><path d="M34.2 22.7 L35.4 14.3 L44.6 14.3 L45.8 22.7 L53.1 25.7 L59.8 20.6 L66.4 27.2 L61.3 33.9 L64.3 41.2 L72.7 42.4 L72.7 51.6 L64.3 52.8 L61.3 60.1 L66.4 66.8 L59.8 73.4 L53.1 68.3 L45.8 71.3 L44.6 79.7 L35.4 79.7 L34.2 71.3 L26.9 68.3 L20.2 73.4 L13.6 66.8 L18.7 60.1 L15.7 52.8 L7.3 51.6 L7.3 42.4 L15.7 41.2 L18.7 33.9 L13.6 27.2 L20.2 20.6 L26.9 25.7Z" fill="#8f979e"/><path d="M30.2 17.7 L31.4 9.3 L40.6 9.3 L41.8 17.7 L49.1 20.7 L55.8 15.6 L62.4 22.2 L57.3 28.9 L60.3 36.2 L68.7 37.4 L68.7 46.6 L60.3 47.8 L57.3 55.1 L62.4 61.8 L55.8 68.4 L49.1 63.3 L41.8 66.3 L40.6 74.7 L31.4 74.7 L30.2 66.3 L22.9 63.3 L16.2 68.4 L9.6 61.8 L14.7 55.1 L11.7 47.8 L3.3 46.6 L3.3 37.4 L11.7 36.2 L14.7 28.9 L9.6 22.2 L16.2 15.6 L22.9 20.7Z" fill="url(#ggr)"/><ellipse cx="38" cy="44" rx="11" ry="13" fill="#7d858c"/><ellipse cx="40" cy="45" rx="7" ry="9.5" fill="#e6e9ec"/></svg>
<div class="a lbl" style="left:476px;top:323px">.user.ini</div>
<div class="a" style="left:676px;top:175px;width:157px;height:144px;background:#cce8ff;border:1px solid #0a78d4;border-bottom:none"></div>
<svg class="a" style="left:703px;top:180px" width="104" height="138" viewBox="0 0 104 138" preserveAspectRatio="xMidYMin slice"><use href="#docl" width="104" height="140"/></svg>
<svg class="a" style="left:723px;top:229px" width="63" height="46"><use href="#eleph"/></svg>
<svg class="a" style="left:771px;top:286px" width="29" height="28"><use href="#vsc"/></svg>
<div class="a" style="left:676px;top:317px;width:157px;height:56px;background:#fff;border:2px solid #000"></div>
<div class="a lbl" style="left:664px;top:323px">1.jpg</div>
<svg class="a" style="left:897px;top:188px" width="94" height="125"><use href="#doc"/></svg>
<svg class="a" style="left:914px;top:222px" width="60" height="60"><use href="#photos"/></svg>
<div class="a lbl" style="left:854px;top:323px">2.jpg</div>
<svg class="a" style="left:1081px;top:180px" width="104" height="140"><use href="#docl"/></svg>
<svg class="a" style="left:1101px;top:229px" width="63" height="46"><use href="#eleph"/></svg>
<svg class="a" style="left:1149px;top:286px" width="29" height="28"><use href="#vsc"/></svg>
<div class="a lbl" style="left:1043px;top:323px">2.php</div>
<!-- row 2 -->
<svg class="a" style="left:309px;top:418px;filter:drop-shadow(2px 3px 3px rgba(0,0,0,.35))" width="132" height="74" viewBox="0 0 132 74"><defs><linearGradient id="gwin3" x1="0" y1="0" x2="0" y2="1"><stop offset="0" stop-color="#5a4c98"/><stop offset=".6" stop-color="#7a70b8"/><stop offset="1" stop-color="#d8e0f0"/></linearGradient><radialGradient id="glamp" cx=".5" cy=".5" r=".5"><stop offset="0" stop-color="#a08060"/><stop offset="1" stop-color="#5f5348"/></radialGradient></defs><rect width="132" height="74" fill="#4a3e34"/><rect x="0" y="0" width="4" height="74" fill="#3a3029"/><rect x="38" y="5" width="7" height="69" fill="#54473c"/><path d="M0 50H27V52H0Z" fill="#2a221c"/><rect x="45" y="0" width="50" height="74" fill="#5c4f44"/><path d="M45 4Q56 0 72 8L76 20H45Z" fill="#6d3a20"/><rect x="45" y="20" width="22" height="25" fill="url(#gwin3)"/><rect x="45" y="45" width="30" height="10" fill="#3f3a38"/><rect x="45" y="55" width="35" height="19" fill="#5e4d40"/><ellipse cx="77" cy="38" rx="7" ry="12" fill="url(#glamp)"/><rect x="95" y="0" width="37" height="56" fill="#4b5a63"/><path d="M95 30L132 22V25L95 33Z" fill="#2f3538"/><rect x="95" y="56" width="37" height="4" fill="#5a4e46"/><path d="M86 46L96 44L132 60V74H80Z" fill="#19181c"/><path d="M94 54L108 60L104 74H90Z" fill="#d4d4d8"/><path d="M100 60L106 62L104 72H98Z" fill="#8ee8c8"/><path d="M74 52L84 50L90 74H70Z" fill="#3c2f80"/><path d="M110 64Q122 60 132 66V74H106Z" fill="#c6c8cc"/><path d="M10 4Q20 0 26 8Q30 14 22 22Q14 26 8 18Q4 10 10 4Z" fill="#9c9c9c"/><path d="M13 9L20 12L17 18L12 15Z" fill="#3a3a3a"/><path d="M28 3H44" stroke="#7a9a80" stroke-width="2" stroke-dasharray="2 1.5" opacity=".7"/><path d="M76 3H100" stroke="#b06a5a" stroke-width="2" stroke-dasharray="2 1.5" opacity=".7"/><path d="M50 70H56M58 70H64M66 70H72" stroke="#4fc8a8" stroke-width="1" opacity=".8"/></svg>
<div class="a lbl" style="left:288px;top:502px">3.jpg</div>
<svg class="a" style="left:519px;top:366px" width="94" height="125"><use href="#doc"/></svg>
<svg class="a" style="left:536px;top:400px" width="60" height="60"><use href="#photos"/></svg>
<div class="a lbl" style="left:476px;top:502px">4.jpg</div>
<svg class="a" style="left:687px;top:373px;filter:drop-shadow(1px 2px 2px rgba(0,0,0,.3))" width="132" height="119" viewBox="0 13 132 119"><use href="#lotus" width="132" height="132"/></svg>
<div class="a lbl" style="left:666px;top:502px">5.jpg</div>
<svg class="a" style="left:876px;top:360px;filter:drop-shadow(1px 2px 2px rgba(0,0,0,.3))" width="132" height="132"><use href="#lotus"/></svg>
<div class="a lbl" style="left:855px;top:502px">6.jpg</div>
<svg class="a" style="left:1084px;top:364px;filter:drop-shadow(1px 2px 2px rgba(0,0,0,.25))" width="98" height="129"><path d="M6 0H60L98 36V123A6 6 0 0 1 92 129H6A6 6 0 0 1 0 123V6A6 6 0 0 1 6 0Z" fill="#efefef"/><path d="M60 0V30A6 6 0 0 0 66 36H98Z" fill="#fbfbfb"/><path d="M15 53H82M15 62H82M15 71H82M15 80H42M15 89H42M15 98H42" stroke="#d6d6d6" stroke-width="3" stroke-linecap="round"/><rect x="48" y="76" width="34" height="21" rx="3" fill="#a8a8a8"/><text x="65" y="92" font-size="15" font-weight="bold" font-family="Liberation Sans" text-anchor="middle" fill="#fff">M↓</text></svg>
<div class="a lbl" style="left:1034px;top:502px;width:200px">图片马的制作.</div>
<!-- footer -->
<div class="a" style="left:215px;top:554px;font-size:18px;line-height:26px;color:#1a1a1a;white-space:nowrap">文件名(N):</div>
<div class="a" style="left:309px;top:552px;width:634px;height:32px;background:#fff;border:1px solid #7a7a7a;border-radius:2px"></div>
<div class="a" style="left:313px;top:554px;font-size:19px;line-height:28px;color:#111">1.php</div>
<svg class="a" style="left:923px;top:563px" width="13" height="8"><path d="M1 1L6.5 6.5L12 1" fill="none" stroke="#444" stroke-width="1.3"/></svg>
<div class="a" style="left:962px;top:552px;width:281px;height:32px;background:#fff;border:1px solid #cfcfcf;border-radius:2px"></div>
<div class="a" style="left:966px;top:554px;font-size:19px;line-height:28px;color:#111;white-space:nowrap">所有文件 (*.*)</div>
<svg class="a" style="left:1223px;top:563px" width="13" height="8"><path d="M1 1L6.5 6.5L12 1" fill="none" stroke="#444" stroke-width="1.3"/></svg>
<div class="a" style="left:963px;top:593px;width:129px;height:37px;background:#fdfdfd;border:1px solid #cfcfcf;border-radius:4px"></div>
<div class="a" style="left:993px;top:598px;font-size:18px;line-height:26px;color:#111">打开</div>
<div class="a" style="left:1113px;top:593px;width:129px;height:37px;background:#fdfdfd;border:1px solid #cfcfcf;border-radius:4px"></div>

<!-- ===== RENAME DIALOG ===== -->
<div class="a" style="left:1005px;top:602px;width:528px;height:226px;background:#f0f0f0;border:1px solid #9a9a9a;border-radius:8px;box-shadow:0 8px 28px rgba(0,0,0,.45);overflow:hidden">
  <div class="a" style="left:0;top:0;width:526px;height:43px;background:#f3f3f3"></div>
  <div class="a" style="left:0;top:43px;width:526px;height:118px;background:#fff;border-bottom:1px solid #dfdfdf"></div>
</div>
<div class="a" style="left:1017px;top:611px;font-size:18px;line-height:26px;color:#1a1a1a">重命名</div>
<svg class="a" style="left:1023px;top:663px" width="42" height="42" viewBox="0 0 42 42"><defs><linearGradient id="gwarn" x1="0" y1="0" x2="0" y2="1"><stop offset="0" stop-color="#ffe000"/><stop offset="1" stop-color="#fcb900"/></linearGradient></defs><path d="M18.5 3Q21 -1 23.5 3L41 36Q43 41 38 41H4Q-1 41 1 36Z" fill="url(#gwarn)" stroke="#e4a200" stroke-width="1.2"/><path d="M21 12V28" stroke="#141420" stroke-width="3.2" stroke-linecap="round"/><circle cx="21" cy="34" r="2.1" fill="#000"/></svg>
<div class="a" style="left:1083px;top:668px;font-size:18px;line-height:28px;color:#111;white-space:nowrap">如果改变文件扩展名，可能会导致文件不可用。</div>
<div class="a" style="left:1083px;top:716px;font-size:18px;line-height:28px;color:#111;white-space:nowrap">确实要更改吗?</div>
<div class="a" style="left:1311px;top:778px;width:97px;height:34px;background:#fdfdfd;border:2px solid #0a66c2;border-radius:4px"></div>
<div class="a" style="left:1314px;top:781px;width:91px;height:28px;border:1px dotted #222"></div>
<div class="a" style="left:1311px;top:781px;width:97px;text-align:center;font-size:18px;line-height:28px;color:#111">是(<u>Y</u>)</div>
<div class="a" style="left:1419px;top:778px;width:97px;height:34px;background:#fdfdfd;border:1px solid #cfcfcf;border-radius:4px"></div>
<div class="a" style="left:1419px;top:781px;width:97px;text-align:center;font-size:18px;line-height:28px;color:#111">否(<u>N</u>)</div>

</body></html>
